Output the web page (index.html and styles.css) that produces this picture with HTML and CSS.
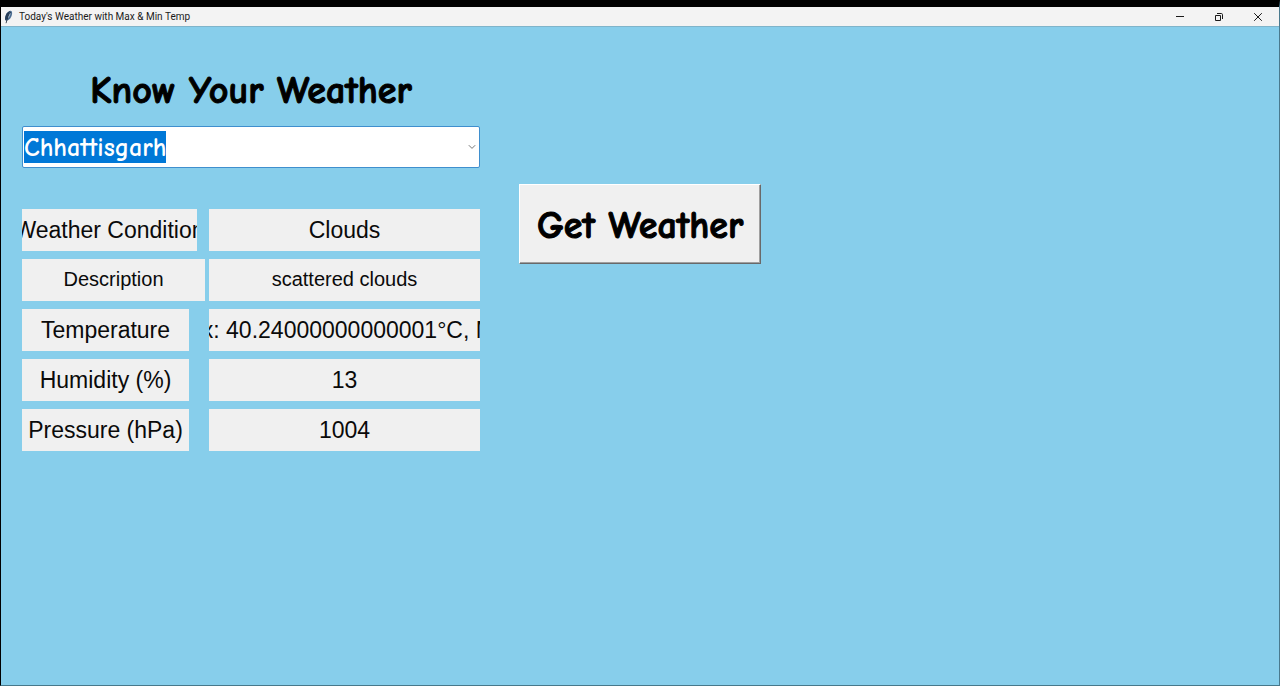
FILE: index.html
```html
<!DOCTYPE html>
<html lang="en">
<head>
<meta charset="utf-8">
<meta name="viewport" content="width=device-width, initial-scale=1">
<title>Today's Weather with Max &amp; Min Temp</title>
<link rel="stylesheet" href="styles.css">
</head>
<body>
<div class="window">
  <header class="titlebar">
    <svg class="feather" viewBox="0 0 9 14" aria-hidden="true">
      <path d="M1.2 10.2C.6 6.600 2.600 2.100 6.200.8c1.600.1 2.100 1.100 1.900 2.900C7.800 7 5.700 9.800 2.900 10.800z" fill="#4b6d92"/>
      <path d="M1.200 10.200C.6 6.600 2.600 2.100 6.200.8L3 9z" fill="#263c58"/>
      <path d="M6.600 2.200C4.600 5 3 8.500 2.100 13.200" fill="none" stroke="#1b2532" stroke-width=".8"/>
      <path d="M6.300 3.400L4.400 7.600" fill="none" stroke="#c3d3e2" stroke-width=".8"/>
    </svg>
    <span class="window-title">Today's Weather with Max &amp; Min Temp</span>
    <div class="window-controls">
      <button class="window-button" type="button" aria-label="Minimize">
        <svg class="window-icon" viewBox="0 0 10 10"><path d="M1 4.500h8"/></svg>
      </button>
      <button class="window-button" type="button" aria-label="Restore">
        <svg class="window-icon" viewBox="0 0 10 10"><path d="M1.500 3.500h5v5h-5zM3 1.500h4.300q1.200 0 1.200 1.200V7"/></svg>
      </button>
      <button class="window-button" type="button" aria-label="Close">
        <svg class="window-icon" viewBox="0 0 10 10"><path d="M1.200 1.200l7.600 7.600M8.800 1.200L1.200 8.800"/></svg>
      </button>
    </div>
  </header>
  <main class="content">
    <section class="panel">
      <h1 class="heading"><label for="state">Know Your Weather</label></h1>
      <div class="combobox">
        <select class="combobox-value" id="state"><option>Chhattisgarh</option></select>
        <svg class="chevron" viewBox="0 0 8 6" aria-hidden="true"><path d="M.8 1.200L4 4.400l3.200-3.200"/></svg>
      </div>
      <table class="readings">
        <tbody>
          <tr>
            <th class="name" scope="row"><div class="cell cell-medium">Weather Condition</div></th>
            <td class="value"><div class="cell">Clouds</div></td>
          </tr>
          <tr class="small">
            <th class="name" scope="row"><div class="cell cell-wide">Description</div></th>
            <td class="value"><div class="cell">scattered clouds</div></td>
          </tr>
          <tr>
            <th class="name" scope="row"><div class="cell cell-narrow">Temperature</div></th>
            <td class="value"><div class="cell">Max: 40.24000000000001°C, Min:</div></td>
          </tr>
          <tr>
            <th class="name" scope="row"><div class="cell cell-narrow">Humidity (%)</div></th>
            <td class="value"><div class="cell">13</div></td>
          </tr>
          <tr>
            <th class="name" scope="row"><div class="cell cell-narrow">Pressure (hPa)</div></th>
            <td class="value"><div class="cell">1004</div></td>
          </tr>
        </tbody>
      </table>
    </section>
    <button class="get-weather" type="button">Get Weather</button>
  </main>
</div>
</body>
</html>
```
FILE: styles.css
```css
* {
  box-sizing: border-box;
}

body {
  margin: 0;
  font-family: "Liberation Sans", Arial, sans-serif;
  color: #0a0a0a;
}

.window {
  display: flex;
  flex-direction: column;
  min-height: 100vh;
  border-style: solid;
  border-width: 7px 1px 1px;
  border-color: #000 #4a7a8e #47788a #000;
  background: #87ceeb;
}

.titlebar {
  display: flex;
  align-items: center;
  height: 20px;
  padding-left: 3px;
  gap: 6px;
  border-bottom: 1px solid #7fb4ca;
  background: #f3f3f3;
}

.feather {
  width: 9px;
  height: 14px;
}

.window-title {
  font: 10px/16px Roboto, sans-serif;
  color: #1a1a1a;
}

.window-controls {
  display: flex;
  margin-left: auto;
  padding-right: 2px;
}

.window-button {
  display: flex;
  align-items: center;
  justify-content: center;
  width: 39px;
  height: 18px;
  padding: 0;
  border: 0;
  background: transparent;
}

.window-icon {
  width: 10px;
  height: 10px;
  fill: none;
  stroke: #1a1a1a;
  stroke-width: 1;
}

.content {
  display: flex;
  flex-wrap: wrap;
  align-items: flex-start;
  gap: 39px;
  padding: 40px 21px;
}

.panel {
  width: 458px;
  max-width: 100%;
}

.heading,
.combobox-value,
.get-weather {
  font-family: "Comic Sans MS", "Comic Neue", "Noto Sans", sans-serif;
  font-weight: 700;
}

.heading,
.get-weather {
  -webkit-text-stroke: 1px #000;
}

.heading {
  margin: 0 0 11px;
  font-size: 38px;
  line-height: 48px;
  text-align: center;
  color: #000;
}

.combobox {
  display: flex;
  align-items: center;
  justify-content: space-between;
  height: 42px;
  padding: 0 3px 0 1px;
  border: 1px solid #3f8fce;
  border-radius: 2px;
  background: #fff;
}

.combobox-value {
  appearance: none;
  field-sizing: content;
  height: 32px;
  padding: 2px 0 0;
  border: 0;
  border-radius: 0;
  outline: 0;
  font-size: 26px;
  line-height: 30px;
  color: #fff;
  background: #0078d7;
}

.chevron {
  width: 8px;
  height: 6px;
  fill: none;
  stroke: #777;
  stroke-width: 1;
}

.readings {
  width: 100%;
  margin-top: 41px;
  border-collapse: collapse;
  table-layout: fixed;
  font-size: 23px;
}

.name,
.value {
  padding: 0 0 8px;
  font-weight: 400;
}

.name {
  width: 187px;
}

.cell {
  display: flex;
  justify-content: center;
  height: 42px;
  overflow: hidden;
  line-height: 42px;
  white-space: nowrap;
  background: #f0f0f0;
}

.cell-narrow {
  width: 167px;
}

.cell-medium {
  width: 175px;
}

.cell-wide {
  width: 183px;
}

.small {
  font-size: 20px;
}

.small .cell {
  line-height: 40px;
}

.get-weather {
  height: 80px;
  margin-top: 117px;
  padding: 4px 17px 0;
  border: 1px solid;
  border-color: #fff #696969 #696969 #fff;
  box-shadow: inset -1px -1px #a0a0a0;
  font-size: 38px;
  line-height: 48px;
  color: #000;
  background: #f0f0f0;
}
```
